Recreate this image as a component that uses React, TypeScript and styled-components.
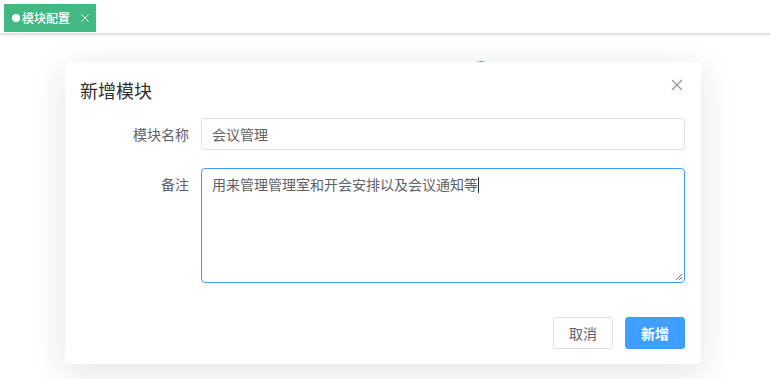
import React from "react";
import styled, { createGlobalStyle } from "styled-components";

const Global = createGlobalStyle`
  html, body { margin: 0; padding: 0; background: #fff; }
  body { font-family: "Noto Sans CJK SC", "Noto Sans", sans-serif; width: 770px; height: 379px; overflow: hidden; }
  * { box-sizing: border-box; }
`;

const Page = styled.div`
  width: 770px;
  height: 379px;
  display: flex;
  flex-direction: column;
  background: #fff;
`;

const TagsBar = styled.div`
  height: 34px;
  flex: none;
  display: flex;
  align-items: center;
  padding: 0 4px;
  background: #fff;
  border-bottom: 1px solid #d8dce5;
  box-shadow: 0 1px 3px 0 rgba(0, 0, 0, 0.12), 0 0 3px 0 rgba(0, 0, 0, 0.04);
`;

const Tag = styled.div`
  height: 28px;
  width: 92px;
  margin-top: 2px;
  background: #42b983;
  color: #fff;
  font-size: 12px;
  font-weight: 500;
  display: flex;
  align-items: center;
  padding-left: 8px;
  gap: 2px;
`;

const Dot = styled.span`
  width: 8px;
  height: 8px;
  border-radius: 50%;
  background: #fff;
  display: inline-block;
`;

const TagClose = styled.span`
  margin-left: 8px;
  font-size: 12px;
  display: flex;
`;

const Stage = styled.div`
  flex: 1;
  position: relative;
  padding: 28px 0 0 65px;
`;

const Spinner = styled.svg`
  position: absolute;
  left: 469px;
  top: 24px;
`;

const Dialog = styled.div`
  position: relative;
  width: 636px;
  height: 302px;
  background: #fff;
  border-radius: 4px;
  box-shadow: 0 8px 32px 4px rgba(0, 0, 0, 0.09);
  display: flex;
  flex-direction: column;
`;

const Header = styled.div`
  padding: 16px 15px 0 15px;
  height: 56px;
  display: flex;
  justify-content: space-between;
  align-items: flex-start;
`;

const Title = styled.div`
  font-size: 18px;
  line-height: 24px;
  color: #303133;
`;

const CloseBtn = styled.div`
  margin-top: 0px;
  margin-right: 2px;
  width: 14px;
  height: 14px;
  display: flex;
`;

const Body = styled.div`
  padding: 0 16px 0 24px;
  display: flex;
  flex-direction: column;
  gap: 18px;
`;

const Row = styled.div`
  display: flex;
  align-items: flex-start;
`;

const Label = styled.label`
  width: 112px;
  padding-right: 12px;
  text-align: right;
  font-size: 14px;
  line-height: 32px;
  color: #606266;
  flex: none;
`;

const Input = styled.div`
  flex: 1;
  height: 32px;
  border: 1px solid #dcdfe6;
  border-radius: 4px;
  padding: 0 10px;
  font-size: 14px;
  line-height: 30px;
  color: #606266;
`;

const TextArea = styled.div`
  flex: 1;
  height: 115px;
  border: 1px solid #409eff;
  border-radius: 4px;
  padding: 4px 10px;
  font-size: 14px;
  line-height: 22px;
  color: #606266;
  position: relative;
`;

const Caret = styled.span`
  display: inline-block;
  width: 1px;
  height: 16px;
  background: #303133;
  vertical-align: -3px;
`;

const Resize = styled.svg`
  position: absolute;
  right: 1px;
  bottom: 1px;
`;

const Footer = styled.div`
  margin-top: auto;
  padding: 0 16px 15px 0;
  display: flex;
  justify-content: flex-end;
  gap: 12px;
`;

const Button = styled.button<{ $primary?: boolean }>`
  width: 60px;
  height: 32px;
  border-radius: 3px;
  font-family: "Noto Sans CJK SC", sans-serif;
  font-size: 14px;
  font-weight: ${(p) => (p.$primary ? 700 : 400)};
  border: 1px solid ${(p) => (p.$primary ? "#409eff" : "#dcdfe6")};
  background: ${(p) => (p.$primary ? "#409eff" : "#fff")};
  color: ${(p) => (p.$primary ? "#fff" : "#606266")};
  padding: 0;
`;

export default function App() {
  return (
    <Page>
      <Global />
      <TagsBar>
        <Tag>
          <Dot />
          <span>模块配置</span>
          <TagClose>
            <svg width="10" height="10" viewBox="0 0 10 10">
              <path d="M1.5 1.5 L8.5 8.5 M8.5 1.5 L1.5 8.5" stroke="#fff" strokeWidth="1" />
            </svg>
          </TagClose>
        </Tag>
      </TagsBar>
      <Stage>
        <Spinner width="24" height="24" viewBox="0 0 24 24">
          <path d="M4 12 A8 8 0 0 1 20 12" fill="none" stroke="#409eff" strokeWidth="2" />
        </Spinner>
        <Dialog>
          <Header>
            <Title>新增模块</Title>
            <CloseBtn>
              <svg width="14" height="14" viewBox="0 0 14 14">
                <path d="M2 2 L12 12 M12 2 L2 12" stroke="#909399" strokeWidth="1.2" />
              </svg>
            </CloseBtn>
          </Header>
          <Body>
            <Row>
              <Label>模块名称</Label>
              <Input>会议管理</Input>
            </Row>
            <Row>
              <Label>备注</Label>
              <TextArea>
                用来管理管理室和开会安排以及会议通知等<Caret />
                <Resize width="8" height="8" viewBox="0 0 8 8">
                  <path d="M7 1 L1 7 M7 4 L4 7" stroke="#777" strokeWidth="1" />
                </Resize>
              </TextArea>
            </Row>
          </Body>
          <Footer>
            <Button>取消</Button>
            <Button $primary>新增</Button>
          </Footer>
        </Dialog>
      </Stage>
    </Page>
  );
}
